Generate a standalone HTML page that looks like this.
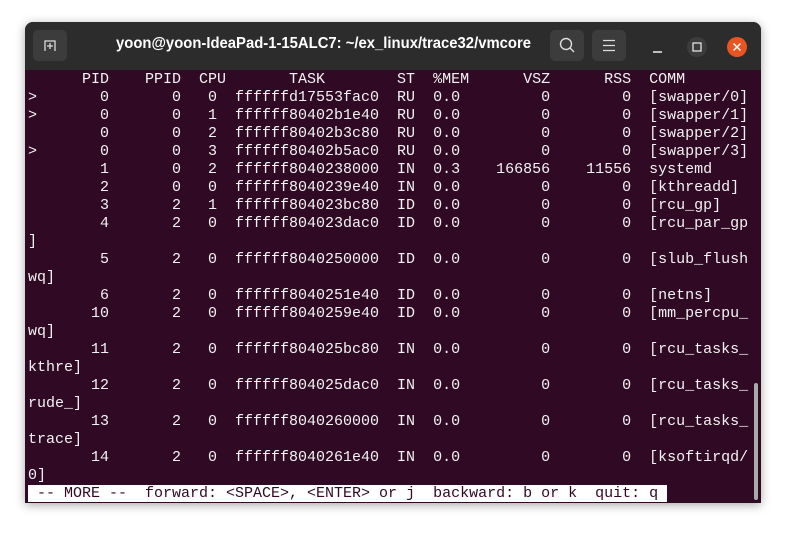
<!DOCTYPE html>
<html><head><meta charset="utf-8"><style>
html,body{margin:0;padding:0;width:786px;height:533px;background:#fff;overflow:hidden}
.win{position:absolute;left:25px;top:22px;width:736px;height:481px;background:#300a24;border-radius:8px 8px 0 0;overflow:hidden;box-shadow:0 2px 10px rgba(0,0,0,.35)}
.tb{position:absolute;left:0;top:0;width:736px;height:48px;background:#2c2c2c}
.title{position:absolute;left:91px;top:13px;white-space:nowrap;color:#fff;font:bold 16px "Liberation Sans",sans-serif;transform-origin:0 0}
.btn{position:absolute;top:8px;width:34px;height:31px;background:#3c3c3c;border-radius:5px}
pre{position:absolute;left:3px;top:49px;margin:0;font:15px/18px "Liberation Mono",monospace;color:#f2f2f2;letter-spacing:0}
.more{background:#fff;color:#300a24}
.sb{position:absolute;left:729px;top:361px;width:4px;height:117px;background:#aaa;border-radius:2px}
</style></head><body>
<div class="win">
<div class="tb">
<div class="btn" style="left:8px"><svg width="34" height="31"><path d="M12 21V11h10v10M17 13v6M14 16h6" stroke="#ddd" stroke-width="1.3" fill="none"/></svg></div>
<div class="title" id="t">yoon@yoon-IdeaPad-1-15ALC7: ~/ex_linux/trace32/vmcore</div>
<div class="btn" style="left:525px"><svg width="34" height="31"><circle cx="16" cy="14" r="5.5" stroke="#ddd" stroke-width="1.4" fill="none"/><path d="M20 18l4 4" stroke="#ddd" stroke-width="1.4"/></svg></div>
<div class="btn" style="left:567px"><svg width="34" height="31"><path d="M11 10.5h12M11 15.5h12M11 20.5h12" stroke="#ddd" stroke-width="1.2"/></svg></div>
<svg style="position:absolute;left:622px;top:14px" width="110" height="22"><path d="M6 16h9" stroke="#eee" stroke-width="1.4"/><circle cx="50" cy="11" r="10" fill="#3c3c3c"/><rect x="46" y="7" width="8" height="8" stroke="#eee" stroke-width="1.2" fill="none"/><circle cx="90" cy="11" r="10" fill="#e95420"/><path d="M86.5 7.5l7 7M93.5 7.5l-7 7" stroke="#fff" stroke-width="1.5"/></svg>
</div>
<pre>      PID    PPID  CPU       TASK        ST  %MEM      VSZ      RSS  COMM
&gt;       0       0   0  ffffffd17553fac0  RU  0.0         0        0  [swapper/0]
&gt;       0       0   1  ffffff80402b1e40  RU  0.0         0        0  [swapper/1]
        0       0   2  ffffff80402b3c80  RU  0.0         0        0  [swapper/2]
&gt;       0       0   3  ffffff80402b5ac0  RU  0.0         0        0  [swapper/3]
        1       0   2  ffffff8040238000  IN  0.3    166856    11556  systemd
        2       0   0  ffffff8040239e40  IN  0.0         0        0  [kthreadd]
        3       2   1  ffffff804023bc80  ID  0.0         0        0  [rcu_gp]
        4       2   0  ffffff804023dac0  ID  0.0         0        0  [rcu_par_gp
]
        5       2   0  ffffff8040250000  ID  0.0         0        0  [slub_flush
wq]
        6       2   0  ffffff8040251e40  ID  0.0         0        0  [netns]
       10       2   0  ffffff8040259e40  ID  0.0         0        0  [mm_percpu_
wq]
       11       2   0  ffffff804025bc80  IN  0.0         0        0  [rcu_tasks_
kthre]
       12       2   0  ffffff804025dac0  IN  0.0         0        0  [rcu_tasks_
rude_]
       13       2   0  ffffff8040260000  IN  0.0         0        0  [rcu_tasks_
trace]
       14       2   0  ffffff8040261e40  IN  0.0         0        0  [ksoftirqd/
0]
<span class="more"> -- MORE --  forward: &lt;SPACE&gt;, &lt;ENTER&gt; or j  backward: b or k  quit: q </span></pre>
<div class="sb"></div>
</div>
<script>
var t=document.getElementById('t');var w=t.getBoundingClientRect().width;if(w>0)t.style.transform='scaleX('+(415/w)+')';
</script>
</body></html>
